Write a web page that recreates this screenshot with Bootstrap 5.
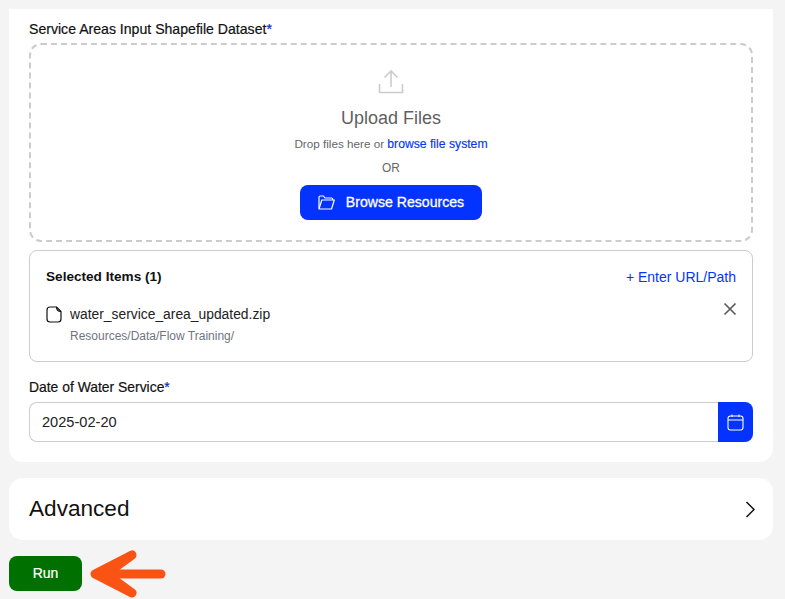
<!DOCTYPE html>
<html lang="en">
<head>
<meta charset="utf-8">
<title>Service Areas</title>
<link rel="stylesheet" href="https://cdn.jsdelivr.net/npm/bootstrap@5.3.0/dist/css/bootstrap.min.css">
<style>
html,body{height:599px;overflow:hidden}
body{background:#f4f4f4;font-family:"Liberation Sans",Arial,sans-serif;color:#111;padding:9px 12px 0 9px}
.panel-main{background:#fff;border-radius:0 0 14px 14px;padding:12px 20px 20px;height:453px}
.field-label{font-size:14.1px;line-height:16px;color:#111;margin-bottom:6px;display:block;font-weight:400;-webkit-text-stroke:.2px #111}
.req{color:#0433ff}
.dropzone{height:199px;border:2px dashed #ccc;border-radius:12px;padding-top:24px;color:#5f5f5f}
.up-ico{display:block;width:26px;height:26px}
.up-title{font-size:18px;line-height:22px;margin-top:12px;color:#5f5f5f}
.up-sub{font-size:11.7px;line-height:14px;margin-top:8px;color:#666}
.up-sub a{font-size:12.2px;color:#0433ff;text-decoration:none;-webkit-text-stroke:.15px #0433ff}
.up-or{font-size:11.9px;line-height:14px;margin-top:10px;color:#666}
.btn-browse{background:#0433ff;color:#fff;border:0;border-radius:8px;height:35px;width:182px;margin-top:10px;font-size:14.1px;font-weight:400;-webkit-text-stroke:.3px #fff;gap:11px}
.btn-browse:hover{background:#0433ff;color:#fff}
.sel-box{height:112px;border:1px solid #ccc;border-radius:8px;margin-top:8px;padding:17px 16px 0}
.sel-title{font-size:13.6px;line-height:18px;font-weight:700;color:#111}
.sel-link{font-size:14px;line-height:18px;color:#0433ff;text-decoration:none;margin-top:-1px}
.file-row{margin-top:19px;height:18px}
.file-name{font-size:13.85px;line-height:18px;color:#222}
.file-path{font-size:12px;line-height:14px;color:#6f7580;margin:6px 0 0 24px}
.x-ico{margin:-3px -1px 0 0}
.date-label{margin-top:17px;margin-bottom:7px;font-size:13.9px}
.date-in{height:40px;border:1px solid #ccc;border-right:0;border-radius:8px 0 0 8px;font-size:14.6px;color:#222;padding:0 12px;font-family:inherit;box-shadow:none}
.date-btn{width:35px;height:40px;background:#0433ff;border:0;border-radius:0 8px 8px 0;padding:0}
.date-btn:hover{background:#0433ff}
.panel-adv{background:#fff;border-radius:14px;height:62px;margin-top:16px;padding:0 17px 0 20px}
.adv-title{font-size:22.6px;color:#111;line-height:26px}
.run-row{margin-top:16px;height:35px}
.btn-run{background:#007000;color:#fff;border:0;border-radius:8px;width:73px;height:35px;font-size:14px;padding:0;-webkit-text-stroke:.2px #fff}
.btn-run:hover{background:#007000;color:#fff}
.arrow{margin:-8px 0 -8px 8px;flex:none}
</style>
</head>
<body>
<section class="panel-main">
  <label class="field-label">Service Areas Input Shapefile Dataset<span class="req">*</span></label>
  <div class="dropzone d-flex flex-column align-items-center text-center">
    <svg class="up-ico" viewBox="0 0 26 26" fill="none" stroke="#ccc" stroke-width="1.6"><path d="M13 18V2.500M6.500 8.500 13 2l6.500 6.500M1.500 15v8.500h23V15"/></svg>
    <div class="up-title">Upload Files</div>
    <div class="up-sub">Drop files here or <a href="#">browse file system</a></div>
    <div class="up-or">OR</div>
    <button type="button" class="btn btn-browse d-flex align-items-center justify-content-center">
      <svg width="17" height="15" viewBox="0 0 17 15" fill="none" stroke="#fff" stroke-width="1.200" stroke-linejoin="round"><path d="M1 13.500V2.200C1 1.500 1.500 1 2.200 1h3.300l1.500 2h6.500c.7 0 1.200.5 1.200 1.200V5"/><path d="M1 14h12.500l2.800-9H3.800L1 14Z"/></svg>
      <span>Browse Resources</span>
    </button>
  </div>
  <div class="sel-box">
    <div class="d-flex justify-content-between align-items-center">
      <span class="sel-title">Selected Items (1)</span>
      <a class="sel-link" href="#">+ Enter URL/Path</a>
    </div>
    <div class="file-row d-flex justify-content-between align-items-start">
      <div class="d-flex align-items-center gap-2">
        <svg width="16" height="17" viewBox="0 0 16 17" fill="none" stroke="#111" stroke-width="1.200" stroke-linejoin="round"><path d="M1 4C1 2.300 2.300 1 4 1h6.500L15 5.500V13c0 1.700-1.300 3-3 3H4c-1.700 0-3-1.300-3-3V4Z"/><path d="M10.500 1c0 2.800 1.700 4.500 4.500 4.500"/></svg>
        <span class="file-name">water_service_area_updated.zip</span>
      </div>
      <svg class="x-ico" width="14" height="14" viewBox="0 0 14 14" fill="none" stroke="#5c5c5c" stroke-width="1.700"><path d="M1.500 1.500l11 11M12.500 1.500l-11 11"/></svg>
    </div>
    <div class="file-path">Resources/Data/Flow Training/</div>
  </div>
  <label class="field-label date-label">Date of Water Service<span class="req">*</span></label>
  <div class="d-flex">
    <input class="form-control date-in" type="text" value="2025-02-20">
    <button type="button" class="btn date-btn d-flex align-items-center justify-content-center flex-shrink-0" aria-label="Pick date">
      <svg width="17" height="17" viewBox="0 0 17 17" fill="none" stroke="#fff" stroke-width="1.100"><rect x="1" y="2" width="15" height="14" rx="2.500"/><path d="M1 6h15M5 .5V3M12 .5V3"/></svg>
    </button>
  </div>
</section>
<section class="panel-adv d-flex justify-content-between align-items-center">
  <span class="adv-title">Advanced</span>
  <svg width="11" height="17" viewBox="0 0 11 17" fill="none" stroke="#111" stroke-width="1.500"><path d="M1.500 1l7.500 7.500-7.500 7.500"/></svg>
</section>
<div class="run-row d-flex align-items-center">
  <button type="button" class="btn btn-run">Run</button>
  <svg class="arrow" width="76" height="50" viewBox="0 0 76 50" fill="#fa5414" stroke="#fa5414" stroke-width="9" stroke-linecap="round" stroke-linejoin="round"><path d="M71 25H26" fill="none"/><path d="M42 6 5 25l37 19L16 25Z"/></svg>
</div>
</body>
</html>
